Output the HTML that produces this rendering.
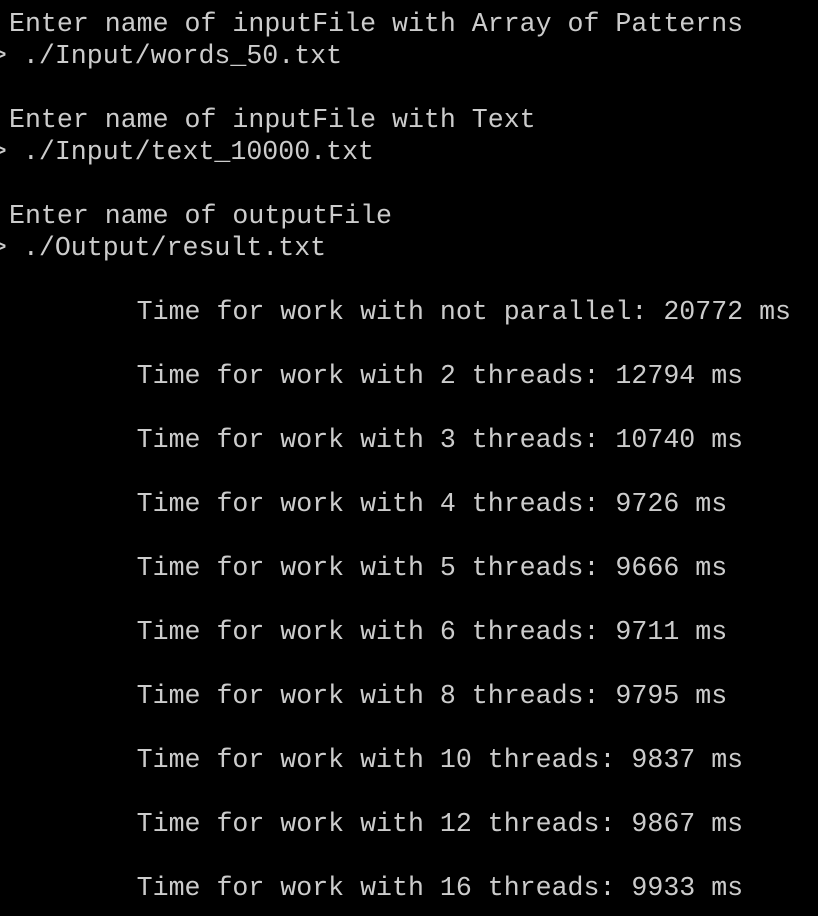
<!DOCTYPE html>
<html><head><meta charset="utf-8"><style>
html,body{margin:0;padding:0;background:#000;width:818px;height:916px;overflow:hidden}
pre{position:absolute;left:9px;top:8px;margin:0;font-family:"Liberation Mono",monospace;font-size:26.6px;line-height:32px;color:#cccccc;tab-size:8}
.p{position:relative;left:-18px}
</style></head><body><pre>Enter name of inputFile with Array of Patterns
<span class="p">&gt; ./Input/words_50.txt</span>

Enter name of inputFile with Text
<span class="p">&gt; ./Input/text_10000.txt</span>

Enter name of outputFile
<span class="p">&gt; ./Output/result.txt</span>

        Time for work with not parallel: 20772 ms

        Time for work with 2 threads: 12794 ms

        Time for work with 3 threads: 10740 ms

        Time for work with 4 threads: 9726 ms

        Time for work with 5 threads: 9666 ms

        Time for work with 6 threads: 9711 ms

        Time for work with 8 threads: 9795 ms

        Time for work with 10 threads: 9837 ms

        Time for work with 12 threads: 9867 ms

        Time for work with 16 threads: 9933 ms</pre></body></html>
